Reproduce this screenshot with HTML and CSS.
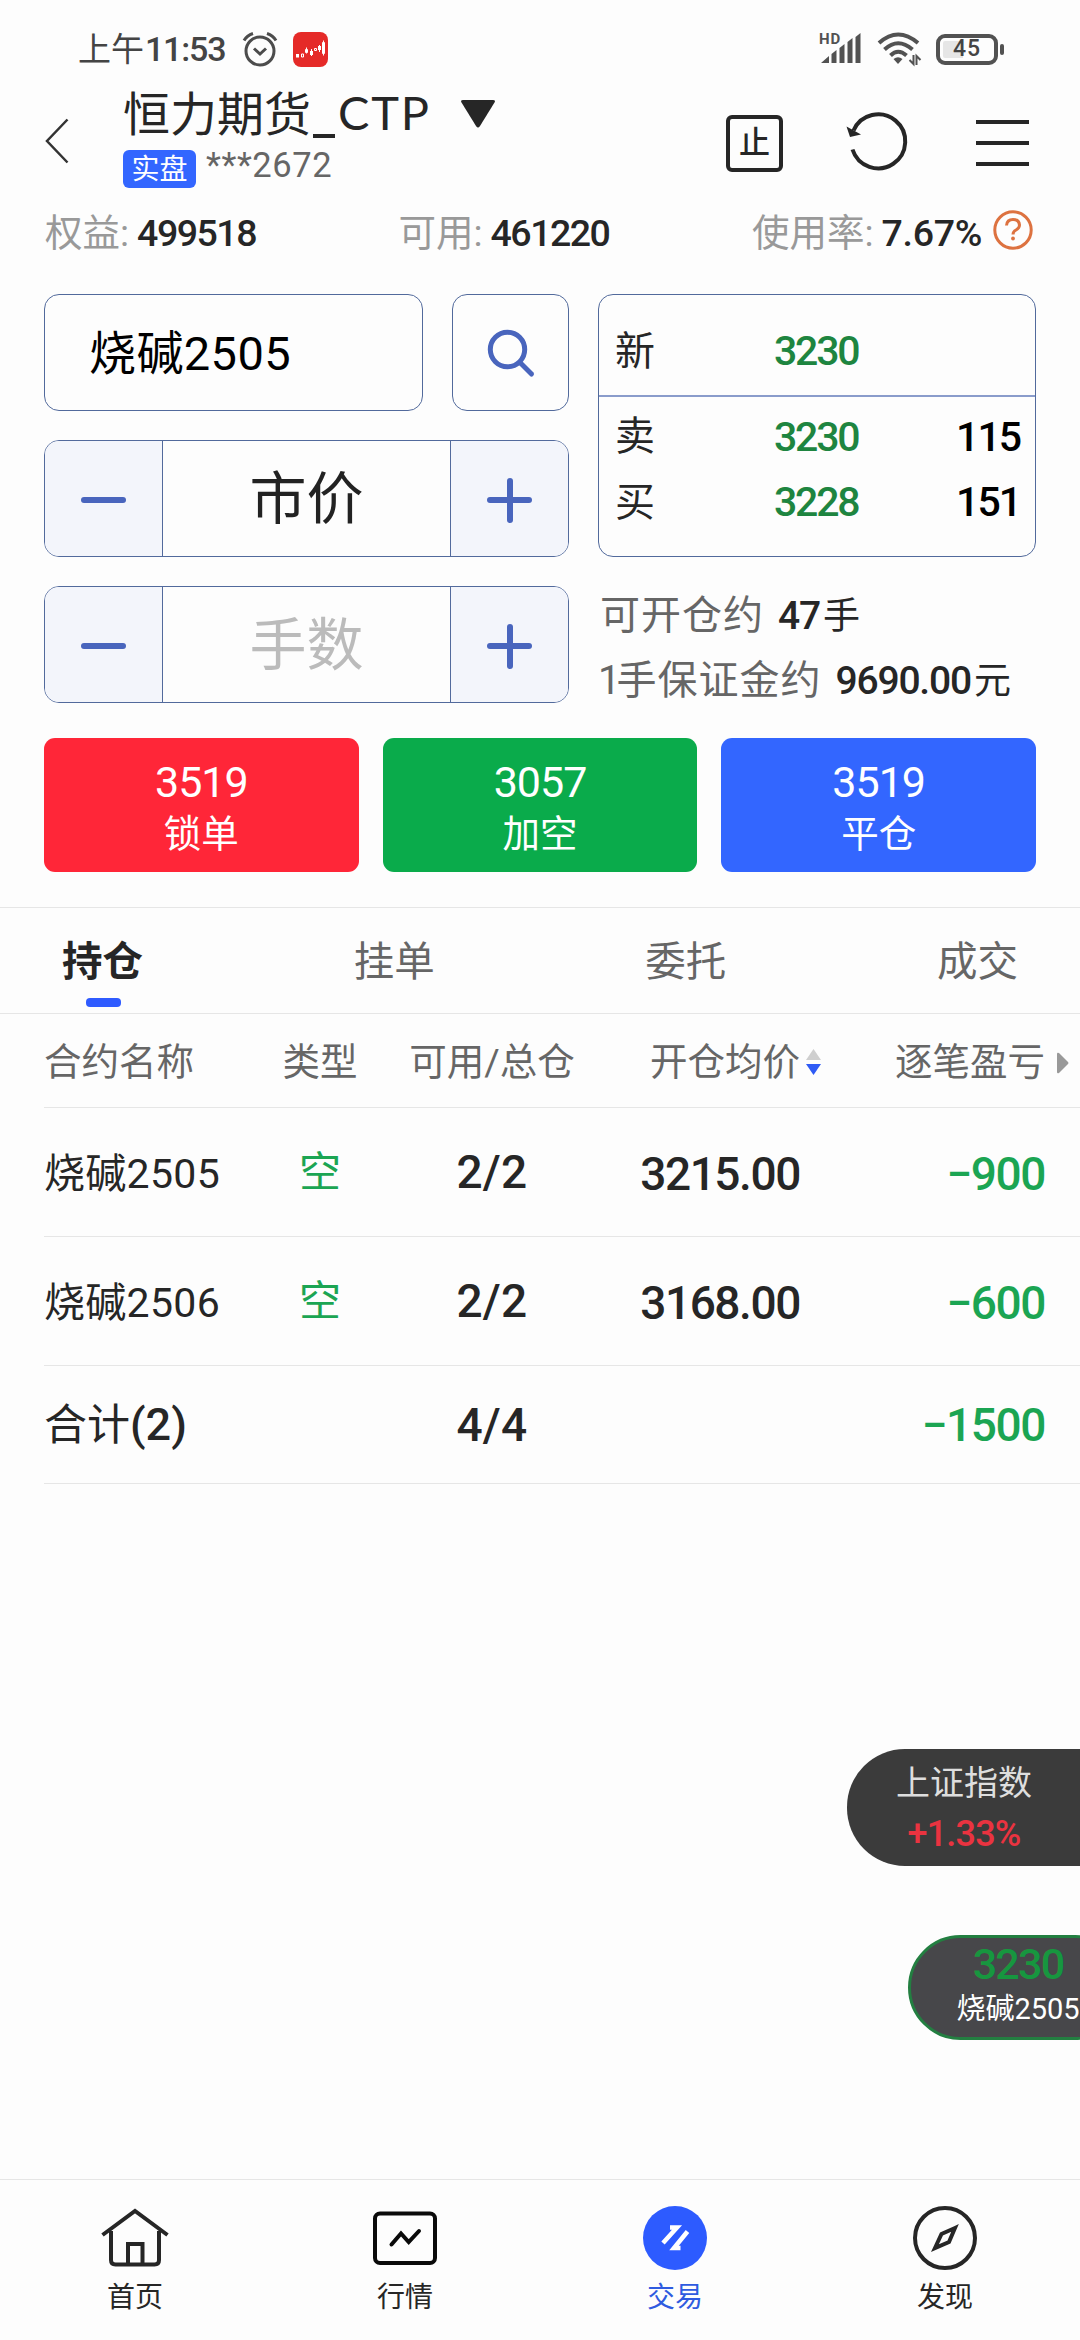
FILE: index.html
```html
<!DOCTYPE html>
<html lang="zh-CN">
<head>
<meta charset="utf-8">
<title>恒力期货_CTP</title>
<link rel="stylesheet" href="styles.css">
</head>
<body>
<div class="app">
  <div class="status">
    <span class="status-time">上午<b>11:53</b></span>
    <svg class="alarm" width="36" height="36" viewBox="0 0 36 36" fill="none" stroke="#4c4c4c" stroke-width="3"><circle cx="18" cy="20" r="14"/><path d="M12 17.500l6 5.500 6-5.500M2 9.500Q5 4.500 11 2.500M34 9.500Q31 4.500 25 2.500"/></svg>
    <svg class="appicon" width="35" height="35" viewBox="0 0 35 35"><rect width="35" height="35" rx="8" fill="#e52a28"/><path d="M3 22h3v3.500H3zM17 19h3v4h-3zM25 14h3v4h-3z" fill="#fff"/><path d="M8.500 22h2v3h-2zM12.500 17.500h2v3h-2zM21.500 16.500h2v2h-2zM29.500 10.500h2v11h-2zM13.500 15.500v6M18.500 17v7M26.500 13v7M30.500 8.500v15" fill="none" stroke="#fff" stroke-width="1"/></svg>
    <div class="status-right">
      <svg width="42" height="32" viewBox="0 0 42 32"><text x="-1" y="11" class="hd">HD</text><path d="M1 30l8-7v7zM11.500 21l5-4v13h-5zM19.500 15l5-4v19h-5zM27.500 9l5-4v25h-5zM35.500 4l5-4v30h-5z" fill="#525252"/></svg>
      <svg width="44" height="34" viewBox="0 0 44 34" fill="none" stroke="#525252" stroke-width="4"><path d="M2 11Q21 -6 41 11M7.500 17.500Q21 5 35.500 17.500M13.500 23.500Q21 16 29.500 23.500"/><path d="M16.500 27q4.500-3.500 9 0l-4.500 5z" fill="#525252" stroke="none"/><path d="M36.500 23v9l-4-4M39.500 33v-9l4 4" stroke-width="2"/></svg>
      <div class="battery"><span>45</span></div>
    </div>
  </div>

  <header class="head">
    <svg class="back" width="24" height="46" viewBox="0 0 24 46" fill="none" stroke="#333" stroke-width="2.500"><path d="M22.500 1.500L2 23 22.500 44.500"/></svg>
    <div class="account">
      <div class="title"><span>恒力期货</span><i></i><span class="ctp">CTP</span><svg width="36" height="30" viewBox="0 0 36 30"><path d="M3 1h30q3 0 1.500 2.500L20 27q-2 3-4 0L1.500 3.500Q0 1 3 1z" fill="#262626"/></svg></div>
      <div class="sub"><span class="badge">实盘</span><span class="acct">***2672</span></div>
    </div>
    <div class="actions">
      <div class="stop">止</div>
      <svg class="reload" width="62" height="62" viewBox="0 0 62 62" fill="none" stroke="#262626" stroke-width="4"><path d="M7.500 37.500A27 27 0 1 0 8.500 18.500"/><path d="M1.500 14.500L16 22.500 5 25z" fill="#262626" stroke="none"/></svg>
      <div class="menu"><i></i><i></i><i></i></div>
    </div>
  </header>

  <div class="funds">
    <div>权益:<b>499518</b></div>
    <div>可用:<b>461220</b></div>
    <div>使用率:<b class="ratio">7.67%</b><svg width="40" height="40" viewBox="0 0 40 40" fill="none" stroke="#dd7240" stroke-width="3"><circle cx="20" cy="20" r="18.200"/><path d="M13.500 15.500q.5-6 6.500-6t6.500 5.500q0 3-3.500 5-3 1.500-3 4.500"/><circle cx="20" cy="28.500" r="1.900" fill="#dd7240" stroke="none"/></svg></div>
  </div>

  <section class="form">
    <div class="inputs">
      <div class="contract">
        <div class="box name">烧碱2505</div>
        <div class="box search"><svg width="50" height="50" viewBox="0 0 50 50" fill="none" stroke="#4965bd" stroke-width="5" stroke-linecap="round"><circle cx="21.500" cy="21.500" r="17.200"/><path d="M35 35.500L45.500 46"/></svg></div>
      </div>
      <div class="box stepper">
        <div class="step"><i></i></div><div class="value">市价</div><div class="step plus"><i></i></div>
      </div>
      <div class="box stepper">
        <div class="step"><i></i></div><div class="value hint">手数</div><div class="step plus"><i></i></div>
      </div>
    </div>
    <div class="info">
      <div class="box quote">
        <div class="q last"><span>新</span><b>3230</b><em></em></div>
        <div class="q ask"><span>卖</span><b>3230</b><em>115</em></div>
        <div class="q bid"><span>买</span><b>3228</b><em>151</em></div>
      </div>
      <div class="calc calc-open">可开仓约<b>47<u>手</u></b></div>
      <div class="calc"><s>1</s>手保证金约<b>9690.00<u>元</u></b></div>
    </div>
  </section>

  <div class="orders">
    <div class="order red"><b>3519</b><span>锁单</span></div>
    <div class="order green"><b>3057</b><span>加空</span></div>
    <div class="order blue"><b>3519</b><span>平仓</span></div>
  </div>

  <nav class="tabs">
    <div class="tab on">持仓</div><div class="tab">挂单</div><div class="tab">委托</div><div class="tab">成交</div>
  </nav>

  <section class="table">
    <div class="row thead">
      <div>合约名称</div><div class="c">类型</div><div class="c">可用/总仓</div>
      <div class="r price">开仓均价<svg width="15" height="28" viewBox="0 0 15 28"><path d="M7.500 1L15 12H0z" fill="#cfcfcf"/><path d="M0 16h15l-7.500 11z" fill="#2f5bf5"/></svg></div>
      <div class="r pnl">逐笔盈亏<svg width="12" height="22" viewBox="0 0 12 22"><path d="M0 2Q0 0 2 1l9 9q1 1 0 2l-9 9q-2 1-2-1z" fill="#999"/></svg></div>
    </div>
    <div class="row">
      <div class="nm">烧碱2505</div><div class="c short">空</div><div class="c num">2/2</div><div class="r price num">3215.00</div><div class="r pnl num loss">−900</div>
    </div>
    <div class="row">
      <div class="nm">烧碱2506</div><div class="c short">空</div><div class="c num">2/2</div><div class="r price num">3168.00</div><div class="r pnl num loss">−600</div>
    </div>
    <div class="row total">
      <div class="sum">合计<b>(2)</b></div><div></div><div class="c num">4/4</div><div></div><div class="r pnl num loss">−1500</div>
    </div>
  </section>

  <div class="float index"><span>上证指数</span><b>+1.33%</b></div>
  <div class="float watch"><b>3230</b><span>烧碱2505</span></div>

  <footer class="nav">
    <div class="item"><svg width="70" height="66" viewBox="0 0 70 66" fill="none" stroke="#262626" stroke-width="4"><path d="M2.500 29L35 5l32.500 24M11 25v29q0 4.500 4.500 4.500h39q4.500 0 4.500-4.500V25M28 58V38h14.500v20"/></svg><span>首页</span></div>
    <div class="item"><svg width="70" height="66" viewBox="0 0 70 66" fill="none" stroke="#0a0a0a" stroke-width="4"><rect x="5" y="7.500" width="60" height="49.500" rx="5"/><path d="M21.500 38.500L31 27.500l7.700 8.500L49 25" stroke-linecap="round"/></svg><span>行情</span></div>
    <div class="item active"><svg width="70" height="66" viewBox="0 0 70 66"><circle cx="35" cy="32" r="32" fill="#2d5bff"/><path d="M23 37L37 21.500H30M47.500 25.500L34 42h6.500" fill="none" stroke="#fff" stroke-width="4.500"/></svg><span>交易</span></div>
    <div class="item"><svg width="70" height="66" viewBox="0 0 70 66" fill="none" stroke="#262626" stroke-width="4"><circle cx="35" cy="32" r="30"/><path d="M45 22L31.500 28 25 42 39 36z"/></svg><span>发现</span></div>
  </footer>
</div>
</body>
</html>
```
FILE: styles.css
```css
* { box-sizing: border-box; }
body { margin: 0; background: #fdfdfd; }
b, i, em, u, s { font-style: normal; text-decoration: none; font-weight: 500; }
svg { display: block; flex: none; overflow: visible; }

.app {
  position: relative;
  width: 1080px;
  height: 2340px;
  overflow: hidden;
  display: flex;
  flex-direction: column;
  background: #fdfdfd;
  color: #262626;
  font-family: Roboto, "Noto Sans CJK SC", sans-serif;
  white-space: nowrap;
}

/* status bar */
.status { height: 98px; display: flex; align-items: center; padding: 0 76px 0 78px; color: #444; }
.status-time { width: 164px; font-size: 33px; line-height: 40px; }
.status-time b { font-size: 34px; letter-spacing: -1.200px; margin-left: 1px; }
.appicon { margin-left: 15px; }
.status-right { margin-left: auto; display: flex; align-items: center; }
.status-right svg { margin-right: 15px; }
.hd { font: 700 15px Roboto, sans-serif; fill: #525252; letter-spacing: 0.800px; }
.battery {
  position: relative; width: 62px; height: 31px; border: 4px solid #525252; border-radius: 9px;
  display: flex; align-items: center; justify-content: center;
  background: linear-gradient(90deg, #e6e6e6 20px, transparent 20px) content-box; padding: 3px;
  margin-right: 6px;
}
.battery span { font-size: 23px; font-weight: 500; line-height: 24px; letter-spacing: 1px; }
.battery::after { content: ""; position: absolute; right: -10px; top: 6px; width: 4px; height: 11px; border-radius: 2px; background: #525252; }

/* account header */
.head { height: 102px; display: flex; padding: 0 51px 0 45px; }
.back { margin-top: 20px; }
.account { margin-left: 54px; }
.title { display: flex; align-items: center; height: 42px; margin-top: -6px; font-size: 47px; line-height: 42px; }
.title span { margin-top: 3px; }
.title i { width: 22px; height: 4px; background: #262626; margin: 46px 2px 0 2px; }
.title .ctp { font-family: Lato, sans-serif; font-size: 47px; letter-spacing: 1.800px; margin-left: 1px; margin-top: -2px; }
.title svg { margin-left: 29px; margin-top: 1px; }
.sub { display: flex; margin-top: 16px; }
.badge { width: 73px; height: 38px; border-radius: 6px; background: #36f; color: #fff; font-size: 28px; line-height: 40px; text-align: center; }
.acct { margin-left: 10px; font-size: 34.500px; line-height: 30px; color: #666; letter-spacing: 0.600px; }
.actions { margin-left: auto; height: 90px; display: flex; align-items: center; }
.stop { width: 57px; height: 57px; border: 4.500px solid #262626; border-radius: 6px; font-size: 31px; line-height: 47px; text-align: center; font-weight: 500; }
.reload { margin-left: 62px; }
.menu { width: 53px; margin-left: 69px; display: grid; gap: 17px; }
.menu i { height: 4px; background: #262626; }

.funds { height: 66px; display: flex; justify-content: space-between; padding: 0 47px 0 45px; font-size: 37.500px; line-height: 67px; color: #999; }
.funds div { display: flex; }
.funds b { color: #262626; margin-left: 8px; letter-spacing: -1.500px; }
.funds .ratio { letter-spacing: -0.300px; }
.funds svg { margin: 10px 0 0 11px; }

/* order form */
.form { margin-top: 28px; height: 409px; padding: 0 44px; display: grid; grid-template-columns: 525px 438px; gap: 29px; }
.box { border: 1.500px solid #526a9c; border-radius: 15px; overflow: hidden; }
.inputs { display: grid; gap: 29px; grid-auto-rows: 117px; }
.contract { display: grid; grid-template-columns: 379px 117px; gap: 29px; }
.name { padding-left: 44px; font-size: 47px; line-height: 117px; color: #000; letter-spacing: 0.400px; }
.search { display: flex; align-items: center; justify-content: center; }
.stepper { display: grid; grid-template-columns: 118px 1fr 118px; }
.step { position: relative; display: flex; align-items: center; justify-content: center; background: #f3f5fb; border-right: 1px solid #526a9c; }
.step.plus { border-right: 0; border-left: 1px solid #526a9c; }
.step i { width: 45px; height: 6px; border-radius: 3px; background: #4965bd; }
.step.plus::after { content: ""; position: absolute; left: calc(50% - 3px); top: calc(50% - 22.500px); width: 6px; height: 45px; border-radius: 3px; background: #4965bd; }
.value { font-size: 57px; line-height: 118px; text-align: center; color: #222; }
.hint { color: #bbb; }
.quote { height: 263px; }
.q { display: grid; grid-template-columns: 158px 150px 1fr; padding: 0 15px 0 16px; font-size: 40px; line-height: 66px; height: 66px; }
.q b { color: #1e8540; font-size: 41px; letter-spacing: -2.200px; margin-left: 1px; }
.q em { color: #000; font-size: 41px; letter-spacing: -2px; text-align: right; }
.last { height: 102px; line-height: 113px; border-bottom: 2px solid #8a9ccb; }
.ask { margin-top: 7px; }
.bid { line-height: 65px; }
.calc { height: 65px; line-height: 65px; font-size: 40px; letter-spacing: 1px; color: #666; padding-left: 2px; }
.calc-open { margin-top: 26px; }
.calc s { font-weight: 400; margin-left: -2px; letter-spacing: -4px; }
.calc b { color: #262626; margin-left: 14px; font-size: 39px; letter-spacing: -1.200px; }
.calc u { font-size: 37px; font-weight: 400; margin-left: 3px; }

.orders { margin-top: 35px; padding: 0 44px; display: grid; grid-template-columns: 1fr 1fr 1fr; gap: 24px; }
.order { height: 134px; border-radius: 11px; color: #fff; text-align: center; display: flex; flex-direction: column; padding-top: 18px; }
.order b { font-size: 43px; line-height: 52px; font-weight: 400; letter-spacing: -1px; }
.order span { font-size: 37.500px; line-height: 52px; }
.red { background: #ff2638; }
.green { background: #0aab4b; }
.blue { background: #36f; }

.tabs { margin-top: 35px; height: 107px; border-top: 1px solid #e6e6e6; border-bottom: 1px solid #e6e6e6; padding: 0 62px; display: flex; justify-content: space-between; font-size: 40.500px; line-height: 109px; color: #666; }
.tab { position: relative; }
.on { color: #262626; font-weight: 700; }
.on::after { content: ""; position: absolute; left: calc(50% - 17px); bottom: 6px; width: 35px; height: 9px; border-radius: 4px; background: #2f5bff; }

/* positions */
.row { margin-left: 44px; height: 129px; border-bottom: 1px solid #e6e6e6; display: grid; grid-template-columns: 236px 80px 264px 200px 256px; line-height: 129px; }
.row.thead { height: 94px; font-size: 37.500px; line-height: 96px; color: #666; }
.row.total { height: 118px; line-height: 118px; }
.c { text-align: center; }
.r { display: flex; justify-content: flex-end; align-items: center; }
.price { padding-right: 24px; }
.pnl { padding-right: 35px; }
.thead .price { padding-right: 3px; }
.thead .price svg { margin: -1px 0 0 6px; }
.thead .pnl { padding-right: 11px; }
.thead .pnl svg { margin: 1px 0 0 12px; }
.nm { font-size: 41px; line-height: 132px; letter-spacing: 0.300px; }
.short { font-size: 42px; color: #1ba553; }
.num { font-size: 46px; font-weight: 500; letter-spacing: -1.400px; line-height: 127px; }
.c.num { letter-spacing: 0.300px; line-height: 129px; }
.total .num, .total .c.num { line-height: 118px; }
.loss { color: #1ba553; }
.sum { font-size: 43px; }
.sum b { font-size: 45px; }

/* floating tickers */
.float { position: absolute; display: flex; flex-direction: column; text-align: center; }
.index { left: 847px; top: 1749px; width: 233px; height: 117px; border-radius: 58px 0 0 58px; background: #3b3b3b; padding: 8px 0 0 1px; color: #dedede; }
.index span { font-size: 34px; line-height: 52px; }
.index b { font-size: 36px; line-height: 50px; color: #ea3340; letter-spacing: -0.800px; }
.watch { left: 908px; top: 1935px; width: 220px; height: 105px; border-radius: 53px; border: 3px solid #237f41; background: #47474a; color: #fff; }
.watch b { font-size: 43px; line-height: 52px; color: #17963f; letter-spacing: -1.800px; }
.watch span { font-size: 29px; line-height: 38px; }

.nav { margin-top: auto; height: 161px; border-top: 1px solid #e6e6e6; padding-top: 26px; display: grid; grid-template-columns: repeat(4, 1fr); background: #fdfdfd; }
.item { display: flex; flex-direction: column; align-items: center; font-size: 28px; line-height: 36px; }
.item span { margin-top: 8px; }
.active { color: #2f5be0; }
```
